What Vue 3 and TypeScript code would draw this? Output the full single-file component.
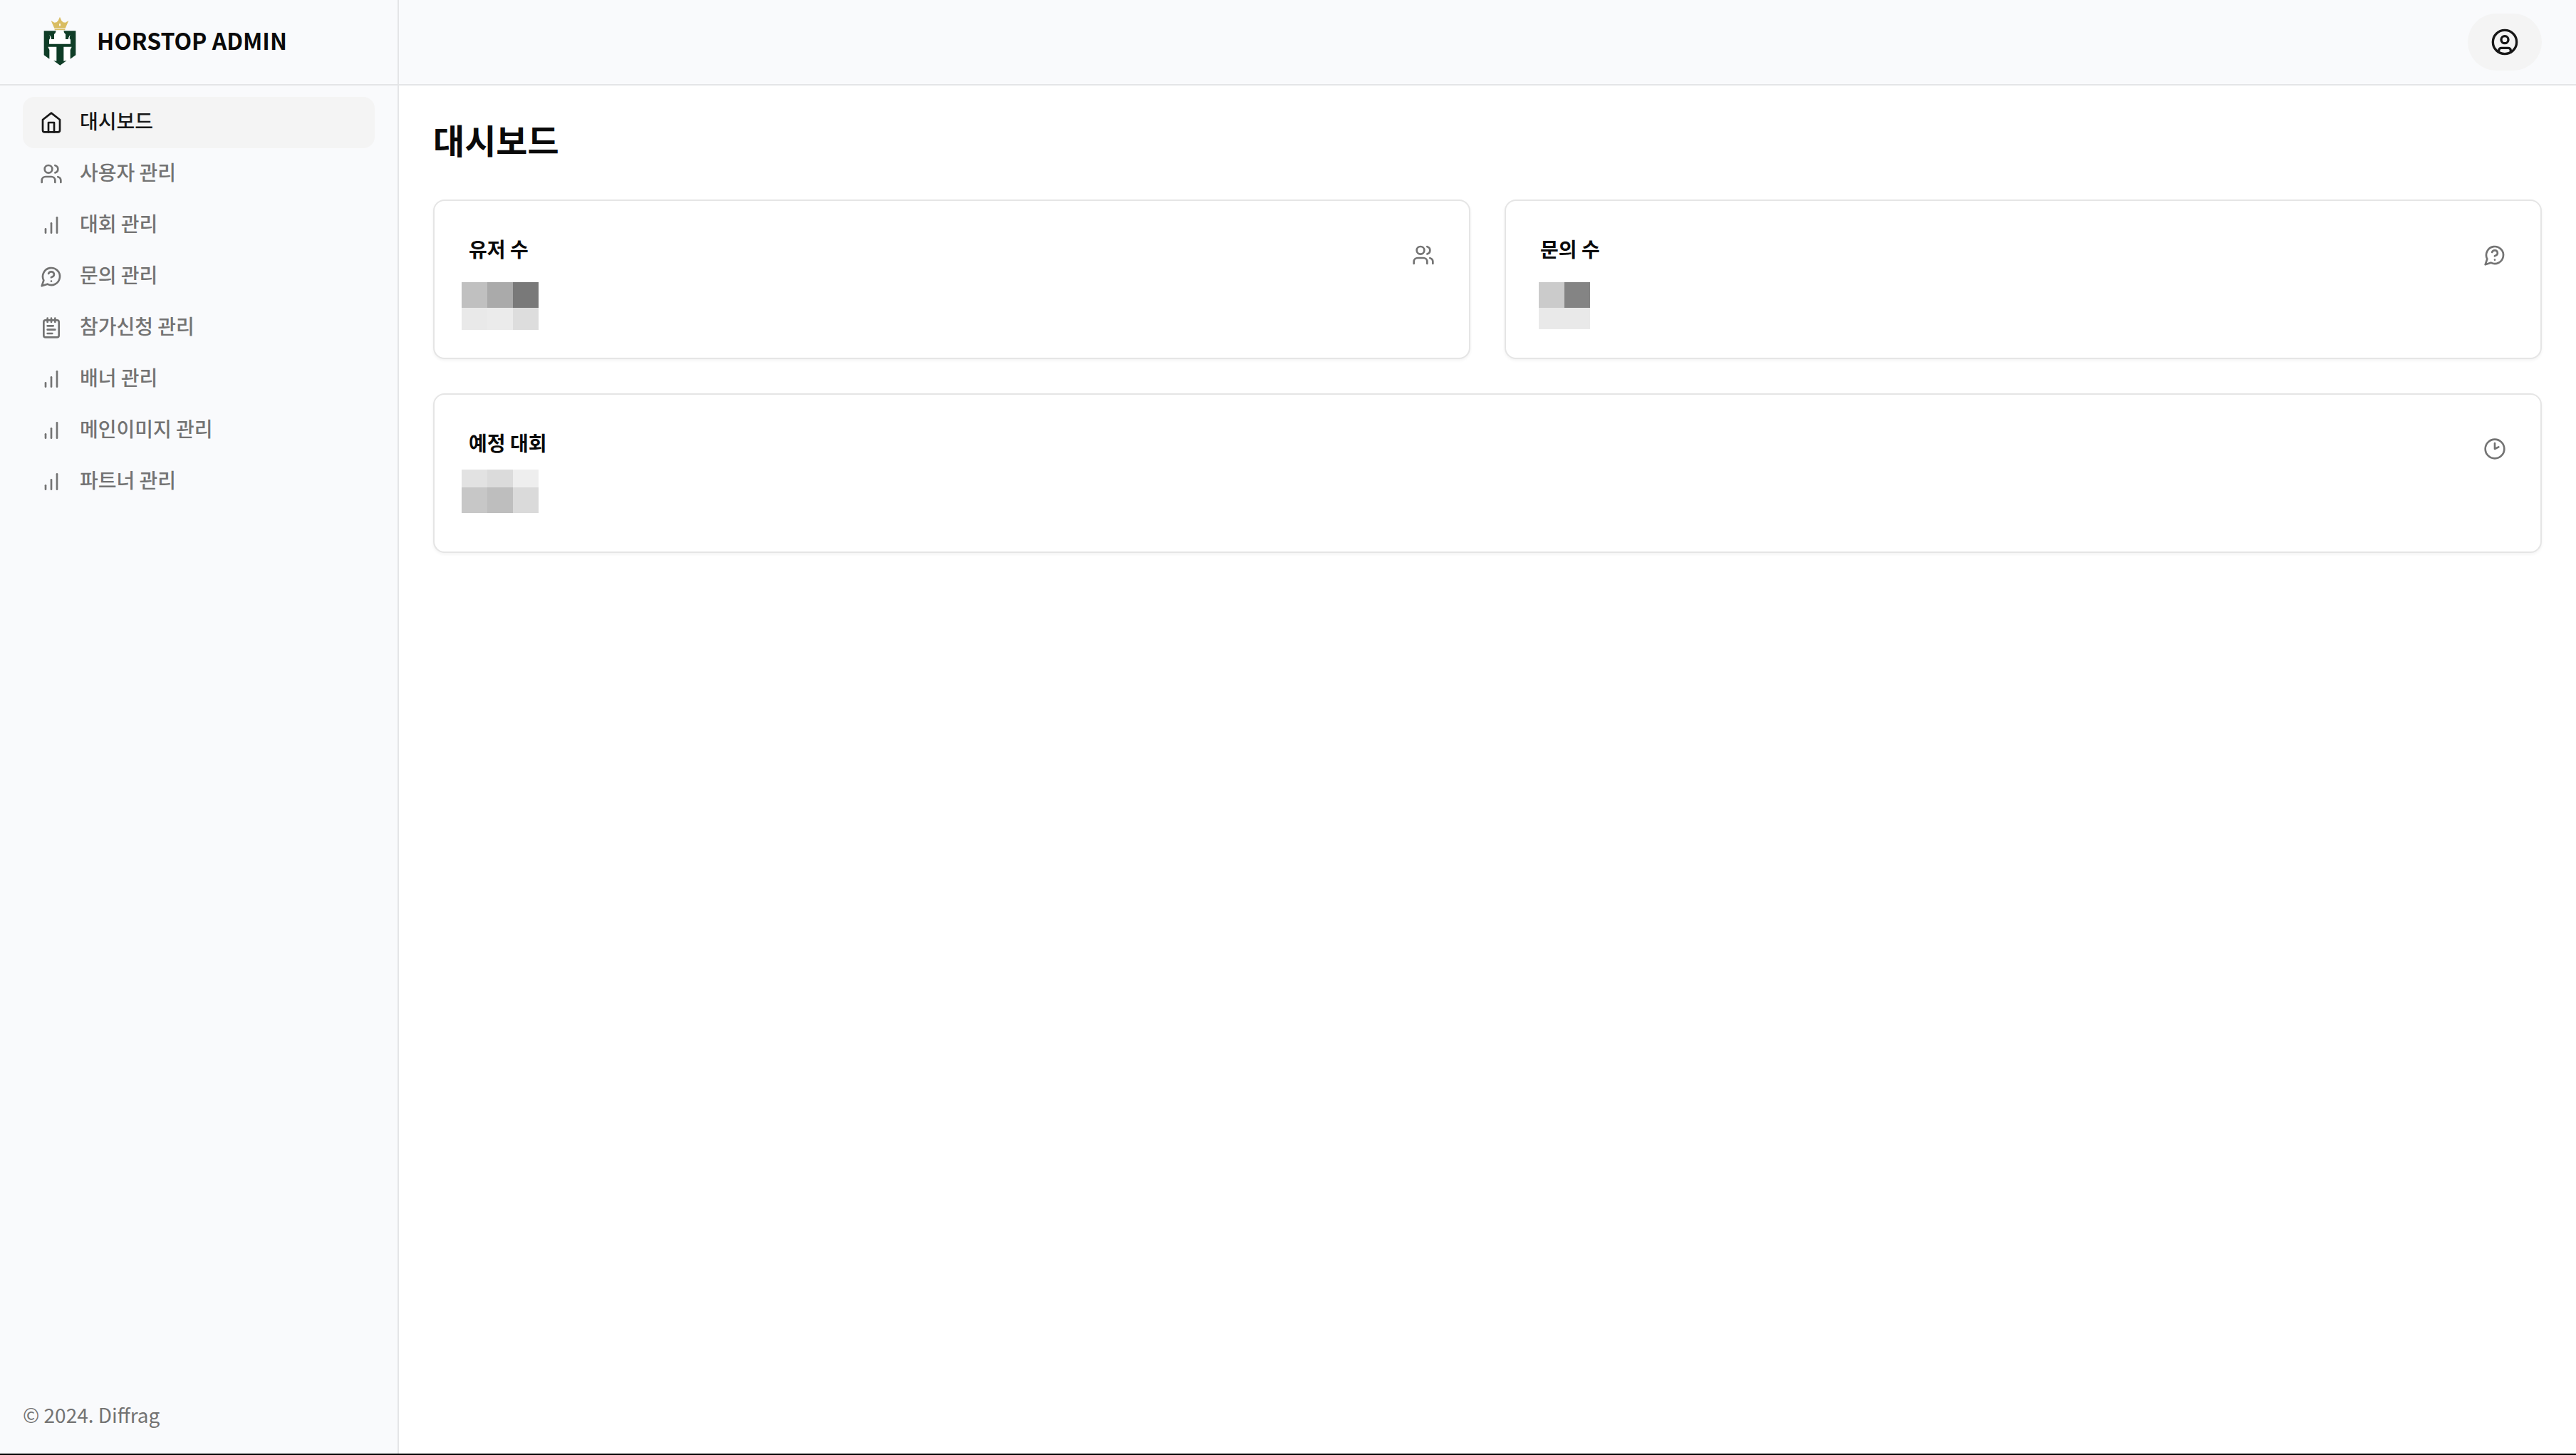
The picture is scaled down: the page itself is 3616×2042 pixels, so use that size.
<script setup lang="ts">
type IconName = 'home' | 'users' | 'chart' | 'question' | 'notepad' | 'clock' | 'account'

interface NavItem {
  label: string
  icon: IconName
}

interface Tile {
  x: number
  y: number
  w: number
  h: number
  fill: string
}

interface StatCard {
  id: string
  title: string
  icon: IconName
  wide: boolean
  tiles: Tile[]
}

const icons: Record<IconName, string[]> = {
  home: ['m3 9 9-7 9 7v11a2 2 0 0 1-2 2H5a2 2 0 0 1-2-2z', 'M9 22V12h6v10'],
  users: [
    'M16 21v-2a4 4 0 0 0-4-4H6a4 4 0 0 0-4 4v2',
    'M5 7a4 4 0 1 0 8 0a4 4 0 1 0-8 0',
    'M22 21v-2a4 4 0 0 0-3-3.87',
    'M16 3.13a4 4 0 0 1 0 7.75',
  ],
  chart: ['M12 20V10', 'M18 20V4', 'M6 20v-4'],
  question: [
    'M7.9 20A9 9 0 1 0 4 16.1L2 22Z',
    'M9.09 9a3 3 0 0 1 5.83 1c0 2-3 3-3 3',
    'M12 17h.01',
  ],
  notepad: [
    'M8 2v4',
    'M12 2v4',
    'M16 2v4',
    'M6 4h12a2 2 0 0 1 2 2v14a2 2 0 0 1-2 2H6a2 2 0 0 1-2-2V6a2 2 0 0 1 2-2z',
    'M8 10h6',
    'M8 14h8',
    'M8 18h5',
  ],
  clock: ['M2 12a10 10 0 1 0 20 0a10 10 0 1 0-20 0', 'M12 6v6l4-2'],
  account: [
    'M2 12a10 10 0 1 0 20 0a10 10 0 1 0-20 0',
    'M9 10a3 3 0 1 0 6 0a3 3 0 1 0-6 0',
    'M7 20.662V19a2 2 0 0 1 2-2h6a2 2 0 0 1 2 2v1.662',
  ],
}

const navItems: NavItem[] = [
  { label: '대시보드', icon: 'home' },
  { label: '사용자 관리', icon: 'users' },
  { label: '대회 관리', icon: 'chart' },
  { label: '문의 관리', icon: 'question' },
  { label: '참가신청 관리', icon: 'notepad' },
  { label: '배너 관리', icon: 'chart' },
  { label: '메인이미지 관리', icon: 'chart' },
  { label: '파트너 관리', icon: 'chart' },
]

const activeLabel = '대시보드'

/** Builds the masked value: two rows of 36px wide gray tiles. */
function mask(x: number, y: number, heights: number[], rows: string[][]): Tile[] {
  return rows.flatMap((row, r) =>
    row.map((fill, c) => ({
      x: x + c * 36,
      y: r === 0 ? y : y + heights[0],
      w: 36,
      h: heights[r],
      fill,
    })),
  )
}

const cards: StatCard[] = [
  {
    id: 'user-count',
    title: '유저 수',
    icon: 'users',
    wide: false,
    tiles: mask(0, 22, [36, 31], [
      ['#c0c0c0', '#aaaaaa', '#797979'],
      ['#e9e9e9', '#ebebeb', '#dddddd'],
    ]),
  },
  {
    id: 'inquiry-count',
    title: '문의 수',
    icon: 'question',
    wide: false,
    tiles: mask(8, 22, [36, 30], [
      ['#cbcbcb', '#848484'],
      ['#e9e9e9', '#e9e9e9'],
    ]),
  },
  {
    id: 'upcoming',
    title: '예정 대회',
    icon: 'clock',
    wide: true,
    tiles: mask(0, 13, [25, 36], [
      ['#e2e2e2', '#dbdbdb', '#eeeeee'],
      ['#c7c7c7', '#bebebe', '#dadada'],
    ]),
  },
]
</script>

<template>
  <div class="layout">
    <aside class="sidebar">
      <a class="brand" href="#">
        <svg class="brand-logo" viewBox="24 42 216 216" aria-hidden="true">
          <path
            fill="#d9bd62"
            d="M95 60l14 8 9-1 7-7 7-16 7 16 7 7 9 1 14-8-14 32h-46zM110 95h44v5h-44z"
          />
          <path fill="#fff" d="M116 101h32l10 16 18 6v100l-44 20-44-20V123l30-6z" />
          <ellipse cx="132" cy="77" rx="3" ry="6" fill="#fff" />
          <path
            fill="#0f3d27"
            d="M65 103h51l-3 9-5 5v21H96v-5l-7-14 2 15-4 6v18h90v-18l-4-6 2-15-7 14v5h-12v-21l-5-5-3-9h51v102l-23 16v-38l6-13h-34v60l13-2-28 20-28-20 13 2v-60H82l6 13v38l-23-16z"
          />
        </svg>
        <span class="brand-name">HORSTOP ADMIN</span>
      </a>
      <nav class="nav" aria-label="관리 메뉴">
        <a
          v-for="item in navItems"
          :key="item.label"
          href="#"
          class="nav-link"
          :class="{ active: item.label === activeLabel }"
          :aria-current="item.label === activeLabel ? 'page' : undefined"
        >
          <svg class="icon" viewBox="0 0 24 24" aria-hidden="true">
            <path v-for="d in icons[item.icon]" :key="d" :d="d" />
          </svg>
          <span class="nav-label">{{ item.label }}</span>
        </a>
      </nav>
      <footer class="copyright">© 2024. Diffrag</footer>
    </aside>

    <div class="content">
      <header class="topbar">
        <button class="account" type="button" aria-label="계정">
          <svg class="icon icon-large" viewBox="0 0 24 24" aria-hidden="true">
            <path v-for="d in icons.account" :key="d" :d="d" />
          </svg>
        </button>
      </header>
      <main class="main">
        <h1 class="page-title">대시보드</h1>
        <div class="cards">
          <section
            v-for="card in cards"
            :key="card.id"
            class="card"
            :class="{ wide: card.wide }"
            :aria-labelledby="card.id"
          >
            <div class="card-head">
              <h2 :id="card.id" class="card-title">{{ card.title }}</h2>
              <svg class="icon card-icon" viewBox="0 0 24 24" aria-hidden="true">
                <path v-for="d in icons[card.icon]" :key="d" :d="d" />
              </svg>
            </div>
            <svg class="masked" viewBox="0 0 108 112" shape-rendering="crispEdges" aria-hidden="true">
              <rect
                v-for="(tile, i) in card.tiles"
                :key="i"
                :x="tile.x"
                :y="tile.y"
                :width="tile.w"
                :height="tile.h"
                :fill="tile.fill"
              />
            </svg>
          </section>
        </div>
      </main>
    </div>
  </div>
</template>

<style>
body {
  margin: 0;
  background: #fff;
}
</style>

<style scoped>
.layout {
  display: grid;
  grid-template-columns: 560px minmax(0, 1fr);
  box-sizing: border-box;
  min-height: 100vh;
  border-bottom: 2px solid #000;
  color: #0a0a0a;
  font-family: 'Noto Sans CJK KR', 'Noto Sans', sans-serif;
  font-size: 28px;
  line-height: 40px;
}

.sidebar {
  display: flex;
  flex-direction: column;
  border-right: 2px solid #e4e5e7;
  background: #f9fafc;
}

.brand {
  display: flex;
  align-items: center;
  gap: 16px;
  box-sizing: border-box;
  height: 120px;
  padding: 0 48px;
  border-bottom: 2px solid #e4e5e7;
  color: #0a0a0a;
  font-size: 32px;
  font-weight: 600;
  text-decoration: none;
}

.brand-logo {
  width: 72px;
  height: 72px;
}

/* The Korean face sits low in its line box; the bottom padding centers it optically. */
.brand-name,
.nav-label {
  padding-bottom: 6px;
  line-height: 34px;
}

.nav {
  display: flex;
  flex-direction: column;
  padding: 16px 32px;
}

.nav-link {
  display: flex;
  align-items: center;
  gap: 24px;
  padding: 16px 24px;
  border-radius: 16px;
  color: #737373;
  font-weight: 500;
  text-decoration: none;
}

.nav-link.active {
  background: #f4f4f4;
  color: #171717;
}

.icon {
  flex: none;
  width: 32px;
  height: 32px;
  fill: none;
  stroke: currentColor;
  stroke-width: 2;
  stroke-linecap: round;
  stroke-linejoin: round;
}

.icon-large {
  width: 40px;
  height: 40px;
}

.copyright {
  margin-top: auto;
  padding: 32px 32px 35px;
  color: #737373;
}

.content {
  display: flex;
  flex-direction: column;
}

.topbar {
  display: flex;
  align-items: center;
  justify-content: flex-end;
  box-sizing: border-box;
  height: 120px;
  padding: 0 48px;
  border-bottom: 2px solid #e4e5e7;
  background: #f9fafc;
}

.account {
  display: flex;
  align-items: center;
  justify-content: center;
  width: 104px;
  height: 80px;
  padding: 0;
  border: 0;
  border-radius: 40px;
  background: #f4f4f4;
  color: #171717;
}

.main {
  display: flex;
  flex-direction: column;
  gap: 48px;
  padding: 48px;
}

.page-title {
  margin: 0;
  padding-bottom: 10px;
  font-size: 48px;
  font-weight: 700;
  line-height: 54px;
}

.cards {
  display: grid;
  grid-template-columns: repeat(2, minmax(0, 1fr));
  gap: 48px;
}

.card {
  padding: 48px 48px 16px;
  border: 2px solid #e5e5e5;
  border-radius: 16px;
  background: #fff;
  box-shadow: 0 2px 4px rgba(0, 0, 0, 0.05);
}

.card.wide {
  grid-column: 1 / -1;
}

.card-head {
  display: flex;
  justify-content: space-between;
}

.card-title {
  margin: 0;
  padding-bottom: 6px;
  font-size: 28px;
  font-weight: 600;
  line-height: 38px;
}

.card-icon {
  align-self: flex-end;
  color: #737373;
}

.masked {
  display: block;
  width: 108px;
  height: 112px;
  margin-left: -10px;
}
</style>
